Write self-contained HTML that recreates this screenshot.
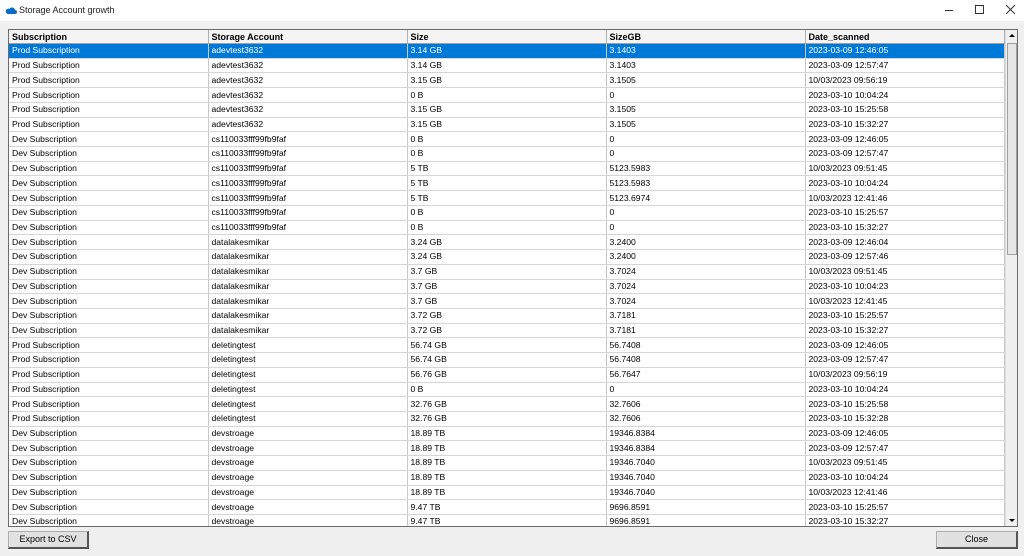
<!DOCTYPE html>
<html><head><meta charset="utf-8"><style>
*{margin:0;padding:0;box-sizing:border-box}
body{width:1024px;height:556px;background:#f0f0f0;font-family:"Liberation Sans",Arial,sans-serif;font-size:9px;color:#000;position:relative;overflow:hidden}
.title{position:absolute;left:0;top:0;width:1024px;height:21px;background:#fff;}
.title .t{position:absolute;left:19px;top:5px;font-size:9px;color:#222}
.grid{position:absolute;left:8px;top:29px;width:1010px;height:498px;border:1px solid #6b6b6b;background:#fff;overflow:hidden}
table{border-collapse:collapse;table-layout:fixed;width:995px;position:absolute;left:0;top:0}
td,th{height:14.72px;padding:0 0 0 3px;text-align:left;white-space:nowrap;overflow:hidden;border-right:1px solid #c8c8c8;border-bottom:1px solid #d6d6d6;font-size:8.6px;line-height:13px}
th{font-weight:bold;height:13.5px;background:#f4f4f4;border-right:1px solid #b0b0b0;border-bottom:1px solid #a0a0a0;font-size:9px;line-height:12px}
tr.sel td{background:#0078d7;color:#fff}
.sb{position:absolute;left:996px;top:0;width:13px;height:496px;background:#f0f0f0;border-left:1px solid #ddd}
.thumb{position:absolute;left:1px;top:13px;width:10px;height:212px;background:#e6e6e6;border:1px solid #a0a0a0}
.btn{position:absolute;height:18px;background:#e1e1e1;border:1px solid #adadad;border-right:2px solid #555;border-bottom:2px solid #555;font-size:9px;text-align:center;line-height:15px}
</style></head><body>
<div class="title">
<svg style="position:absolute;left:5px;top:6px" width="12" height="8" viewBox="0 0 12 8"><path d="M2.5 8h7.5a2 2 0 0 0 0-4 3 3 0 0 0-5.5-1.2A2.6 2.6 0 0 0 2.5 8z" fill="#0a6cc6"/></svg>
<span class="t">Storage Account growth</span>
<span style="position:absolute;left:945px;top:10px;width:8px;height:1px;background:#333"></span>
<span style="position:absolute;left:975px;top:5px;width:9px;height:9px;border:1px solid #333"></span>
<svg style="position:absolute;left:1006px;top:5px" width="9" height="9" viewBox="0 0 9 9"><path d="M0 0L9 9M9 0L0 9" stroke="#333" stroke-width="1"/></svg>
</div>
<div class="grid">
<table>
<colgroup><col style="width:199px"><col style="width:199px"><col style="width:199px"><col style="width:199px"><col style="width:199px"></colgroup>
<tr><th>Subscription</th><th>Storage Account</th><th>Size</th><th>SizeGB</th><th>Date_scanned</th></tr>
<tr class="sel"><td>Prod Subscription</td><td>adevtest3632</td><td>3.14 GB</td><td>3.1403</td><td>2023-03-09 12:46:05</td></tr>
<tr><td>Prod Subscription</td><td>adevtest3632</td><td>3.14 GB</td><td>3.1403</td><td>2023-03-09 12:57:47</td></tr>
<tr><td>Prod Subscription</td><td>adevtest3632</td><td>3.15 GB</td><td>3.1505</td><td>10/03/2023 09:56:19</td></tr>
<tr><td>Prod Subscription</td><td>adevtest3632</td><td>0 B</td><td>0</td><td>2023-03-10 10:04:24</td></tr>
<tr><td>Prod Subscription</td><td>adevtest3632</td><td>3.15 GB</td><td>3.1505</td><td>2023-03-10 15:25:58</td></tr>
<tr><td>Prod Subscription</td><td>adevtest3632</td><td>3.15 GB</td><td>3.1505</td><td>2023-03-10 15:32:27</td></tr>
<tr><td>Dev Subscription</td><td>cs110033fff99fb9faf</td><td>0 B</td><td>0</td><td>2023-03-09 12:46:05</td></tr>
<tr><td>Dev Subscription</td><td>cs110033fff99fb9faf</td><td>0 B</td><td>0</td><td>2023-03-09 12:57:47</td></tr>
<tr><td>Dev Subscription</td><td>cs110033fff99fb9faf</td><td>5 TB</td><td>5123.5983</td><td>10/03/2023 09:51:45</td></tr>
<tr><td>Dev Subscription</td><td>cs110033fff99fb9faf</td><td>5 TB</td><td>5123.5983</td><td>2023-03-10 10:04:24</td></tr>
<tr><td>Dev Subscription</td><td>cs110033fff99fb9faf</td><td>5 TB</td><td>5123.6974</td><td>10/03/2023 12:41:46</td></tr>
<tr><td>Dev Subscription</td><td>cs110033fff99fb9faf</td><td>0 B</td><td>0</td><td>2023-03-10 15:25:57</td></tr>
<tr><td>Dev Subscription</td><td>cs110033fff99fb9faf</td><td>0 B</td><td>0</td><td>2023-03-10 15:32:27</td></tr>
<tr><td>Dev Subscription</td><td>datalakesmikar</td><td>3.24 GB</td><td>3.2400</td><td>2023-03-09 12:46:04</td></tr>
<tr><td>Dev Subscription</td><td>datalakesmikar</td><td>3.24 GB</td><td>3.2400</td><td>2023-03-09 12:57:46</td></tr>
<tr><td>Dev Subscription</td><td>datalakesmikar</td><td>3.7 GB</td><td>3.7024</td><td>10/03/2023 09:51:45</td></tr>
<tr><td>Dev Subscription</td><td>datalakesmikar</td><td>3.7 GB</td><td>3.7024</td><td>2023-03-10 10:04:23</td></tr>
<tr><td>Dev Subscription</td><td>datalakesmikar</td><td>3.7 GB</td><td>3.7024</td><td>10/03/2023 12:41:45</td></tr>
<tr><td>Dev Subscription</td><td>datalakesmikar</td><td>3.72 GB</td><td>3.7181</td><td>2023-03-10 15:25:57</td></tr>
<tr><td>Dev Subscription</td><td>datalakesmikar</td><td>3.72 GB</td><td>3.7181</td><td>2023-03-10 15:32:27</td></tr>
<tr><td>Prod Subscription</td><td>deletingtest</td><td>56.74 GB</td><td>56.7408</td><td>2023-03-09 12:46:05</td></tr>
<tr><td>Prod Subscription</td><td>deletingtest</td><td>56.74 GB</td><td>56.7408</td><td>2023-03-09 12:57:47</td></tr>
<tr><td>Prod Subscription</td><td>deletingtest</td><td>56.76 GB</td><td>56.7647</td><td>10/03/2023 09:56:19</td></tr>
<tr><td>Prod Subscription</td><td>deletingtest</td><td>0 B</td><td>0</td><td>2023-03-10 10:04:24</td></tr>
<tr><td>Prod Subscription</td><td>deletingtest</td><td>32.76 GB</td><td>32.7606</td><td>2023-03-10 15:25:58</td></tr>
<tr><td>Prod Subscription</td><td>deletingtest</td><td>32.76 GB</td><td>32.7606</td><td>2023-03-10 15:32:28</td></tr>
<tr><td>Dev Subscription</td><td>devstroage</td><td>18.89 TB</td><td>19346.8384</td><td>2023-03-09 12:46:05</td></tr>
<tr><td>Dev Subscription</td><td>devstroage</td><td>18.89 TB</td><td>19346.8384</td><td>2023-03-09 12:57:47</td></tr>
<tr><td>Dev Subscription</td><td>devstroage</td><td>18.89 TB</td><td>19346.7040</td><td>10/03/2023 09:51:45</td></tr>
<tr><td>Dev Subscription</td><td>devstroage</td><td>18.89 TB</td><td>19346.7040</td><td>2023-03-10 10:04:24</td></tr>
<tr><td>Dev Subscription</td><td>devstroage</td><td>18.89 TB</td><td>19346.7040</td><td>10/03/2023 12:41:46</td></tr>
<tr><td>Dev Subscription</td><td>devstroage</td><td>9.47 TB</td><td>9696.8591</td><td>2023-03-10 15:25:57</td></tr>
<tr><td>Dev Subscription</td><td>devstroage</td><td>9.47 TB</td><td>9696.8591</td><td>2023-03-10 15:32:27</td></tr>
</table>
<div class="sb"><div style="position:absolute;left:3px;top:4px;width:0;height:0;border-left:3px solid transparent;border-right:3px solid transparent;border-bottom:3px solid #000"></div><div class="thumb"></div><div style="position:absolute;left:3px;bottom:4px;width:0;height:0;border-left:3px solid transparent;border-right:3px solid transparent;border-top:3px solid #000"></div></div>
</div>
<div class="btn" style="left:8px;top:531px;width:81px">Export to CSV</div>
<div class="btn" style="left:936px;top:531px;width:82px">Close</div>
</body></html>
